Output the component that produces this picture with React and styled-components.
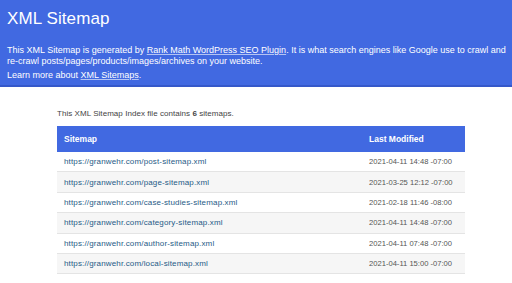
import React from "react";
import styled, { createGlobalStyle } from "styled-components";

const Global = createGlobalStyle`
  html, body { margin: 0; padding: 0; background: #fff; }
  body { font-family: "Liberation Sans", Arial, sans-serif; }
`;

const Header = styled.header`
  background: #4169e1;
  border-bottom: 2px solid #3558c9;
  height: 87px;
  padding: 9px 7px 0;
  box-sizing: border-box;
  color: #fff;
`;

const Title = styled.h1`
  margin: 0;
  font-size: 17px;
  line-height: 20px;
  font-weight: 400;
  letter-spacing: 0.1px;
`;

const Desc = styled.p`
  margin: ${(p) => p.$mt}px 0 0;
  font-size: 9px;
  line-height: 11px;
  width: 505px;
`;

const HeadLink = styled.a`
  color: #fff;
  text-decoration: underline;
  text-decoration-color: rgba(255, 255, 255, 0.6);
  text-underline-offset: 1px;
`;

const Content = styled.main`
  padding: 21px 0 0 57px;
`;

const Intro = styled.p`
  margin: 0 0 7px;
  font-size: 8px;
  line-height: 11px;
  letter-spacing: 0.05px;
  color: #444;
`;

const Table = styled.table`
  width: 408px;
  border-collapse: collapse;
  table-layout: fixed;
`;

const Th = styled.th`
  background: #4169e1;
  color: #fff;
  font-size: 8.5px;
  font-weight: 700;
  text-align: left;
  height: 26px;
  padding: 0 7px;
  width: ${(p) => (p.$w ? p.$w + "px" : "auto")};
  box-sizing: border-box;
`;

const Tr = styled.tr`
  background: ${(p) => (p.$alt ? "#f6f6f6" : "#fff")};
  border-bottom: 1px solid #e4e4e4;
`;

const Td = styled.td`
  height: 19.4px;
  padding: 0 7px;
  font-size: ${(p) => (p.$link ? "8px" : "7.6px")};
  letter-spacing: ${(p) => (p.$link ? "0.15px" : "0")};
  color: ${(p) => (p.$link ? "#1f5b86" : "#555")};
  white-space: nowrap;
`;

const rows = [
  ["post-sitemap.xml", "2021-04-11 14:48 -07:00"],
  ["page-sitemap.xml", "2021-03-25 12:12 -07:00"],
  ["case-studies-sitemap.xml", "2021-02-18 11:46 -08:00"],
  ["category-sitemap.xml", "2021-04-11 14:48 -07:00"],
  ["author-sitemap.xml", "2021-04-11 07:48 -07:00"],
  ["local-sitemap.xml", "2021-04-11 15:00 -07:00"],
];

export default function App() {
  return (
    <>
      <Global />
      <Header>
        <Title>XML Sitemap</Title>
        <Desc $mt={16}>
          This XML Sitemap is generated by <HeadLink>Rank Math WordPress SEO Plugin</HeadLink>. It is what search engines like Google use to crawl and re-crawl posts/pages/products/images/archives on your website.
        </Desc>
        <Desc $mt={3}>
          Learn more about <HeadLink>XML Sitemaps</HeadLink>.
        </Desc>
      </Header>
      <Content>
        <Intro>
          This XML Sitemap Index file contains <b>6</b> sitemaps.
        </Intro>
        <Table>
          <thead>
            <tr>
              <Th>Sitemap</Th>
              <Th $w={103}>Last Modified</Th>
            </tr>
          </thead>
          <tbody>
            {rows.map(([u, d], i) => (
              <Tr key={u} $alt={i % 2 === 1}>
                <Td $link>https://granwehr.com/{u}</Td>
                <Td>{d}</Td>
              </Tr>
            ))}
          </tbody>
        </Table>
      </Content>
    </>
  );
}
